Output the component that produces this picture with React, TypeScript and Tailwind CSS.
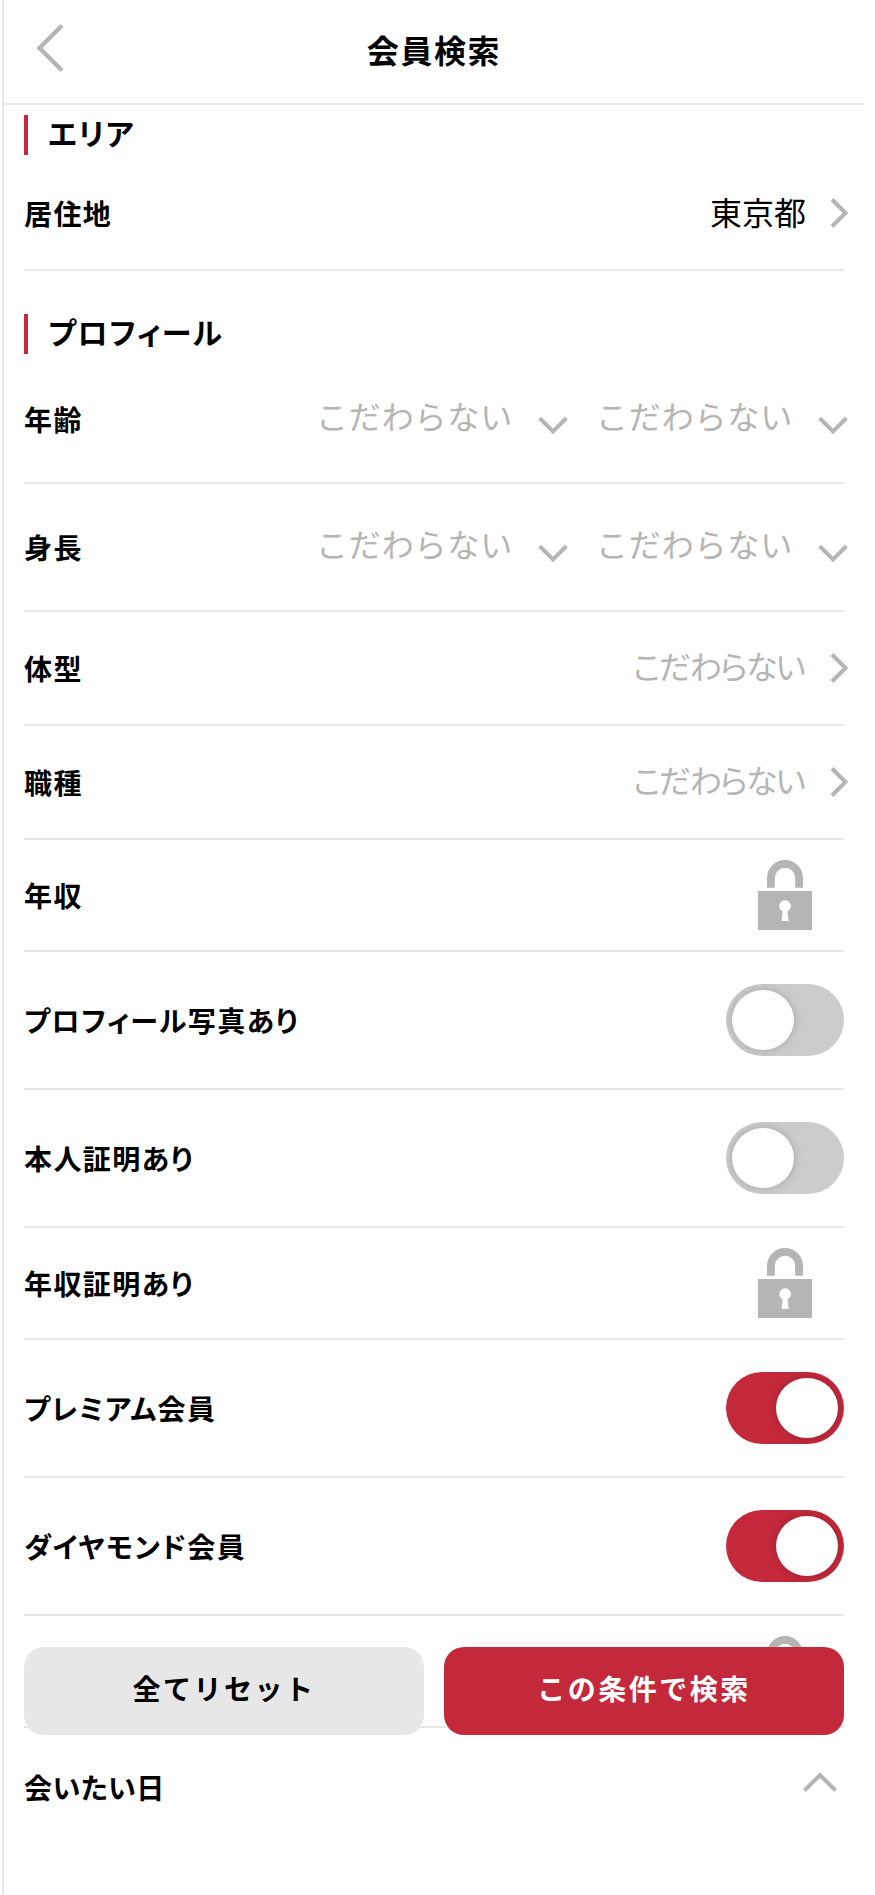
import clsx from 'clsx'
import { useState, type ReactNode } from 'react'

type Direction = 'right' | 'down' | 'up' | 'back'

const chevrons: Record<Direction, { width: number; height: number; d: string; stroke: number }> = {
  right: { width: 20, height: 32, d: 'M3 2.5L16.5 16L3 29.5', stroke: 4 },
  down: { width: 32, height: 20, d: 'M2.7 3.2L16 16.5L29.3 3.2', stroke: 4 },
  up: { width: 36, height: 22, d: 'M2.5 19.5L18 4L33.5 19.5', stroke: 4 },
  back: { width: 28, height: 50, d: 'M26 2.5L3.5 25L26 47.5', stroke: 4.4 },
}

function Chevron({ direction, className }: { direction: Direction; className?: string }) {
  const { width, height, d, stroke } = chevrons[direction]
  return (
    <svg
      width={width}
      height={height}
      viewBox={`0 0 ${width} ${height}`}
      fill="none"
      stroke="#b5b5b5"
      strokeWidth={stroke}
      className={clsx('shrink-0', className)}
    >
      <path d={d} />
    </svg>
  )
}

function LockIcon() {
  return (
    <svg width="54" height="70" viewBox="0 0 54 70" className="mr-8 shrink-0">
      <path d="M12.9 27.7V18a14.1 14.1 0 0 1 28.2 0V27.7" fill="none" stroke="#b5b5b5" strokeWidth="7.8" />
      <path
        d="M0 31H54V70H0ZM24.7 51.3L23.5 61H30.7L29.5 51.3A5.8 5.8 0 1 0 24.7 51.3Z"
        fill="#b5b5b5"
        fillRule="evenodd"
      />
    </svg>
  )
}

function Toggle({ label, defaultOn = false }: { label: string; defaultOn?: boolean }) {
  const [on, setOn] = useState(defaultOn)
  return (
    <button
      role="switch"
      aria-checked={on}
      aria-label={label}
      onClick={() => setOn((value) => !value)}
      className={clsx(
        'flex h-[72px] w-[118px] shrink-0 items-center overflow-hidden rounded-full px-1.5',
        on ? 'justify-end bg-[#c3293b]' : 'bg-[#cccccc]',
      )}
    >
      <span className="h-[60px] w-[62px] rounded-[50%] bg-white shadow-[0_0_10px_rgba(0,0,0,0.2)]" />
    </button>
  )
}

function SectionTitle({ children, className }: { children: ReactNode; className?: string }) {
  return (
    <h2
      className={clsx(
        'mb-0.5 flex h-10 items-center border-l-4 border-[#c3293b] pb-1.5 pl-5 text-[30px] leading-none font-bold tracking-[0.05em]',
        className,
      )}
    >
      {children}
    </h2>
  )
}

interface RowProps {
  label?: string
  className: string
  children: ReactNode
}

function Row({ label, className, children }: RowProps) {
  return (
    <div className={clsx('flex items-center justify-between border-b-2 border-[#e7e7e7]', className)}>
      <span className="text-[28px] leading-10 font-bold tracking-[0.05em]">{label}</span>
      {children}
    </div>
  )
}

function LinkValue({ value, muted = false }: { value: string; muted?: boolean }) {
  return (
    <button className="-mr-[5px] flex items-center gap-[23px]">
      <span
        className={clsx(
          'text-[32px] leading-10',
          muted ? 'mr-0.5 pb-1.5 tracking-[-0.056em] text-[#b5b5b5]' : 'pb-1',
        )}
      >
        {value}
      </span>
      <Chevron direction="right" />
    </button>
  )
}

function RangeSelect() {
  return (
    <div className="-mr-[5px] flex gap-6">
      {['min', 'max'].map((key) => (
        <button key={key} className="flex w-64 items-center justify-between pl-[3px] text-[#b5b5b5]">
          <span className="pb-2 text-[32px] leading-10 tracking-[0.027em] [font-feature-settings:normal]">
            こだわらない
          </span>
          <Chevron direction="down" className="mt-3" />
        </button>
      ))}
    </div>
  )
}

export default function App() {
  return (
    <div
      lang="ja"
      className="relative h-[1895px] overflow-hidden bg-white pl-0.5 font-['Noto_Sans_CJK_JP',sans-serif] text-black [font-feature-settings:'palt']"
    >
      <div className="h-full w-[862px] border-l-2 border-[#e7e7e7]">
        <header className="grid h-[105px] grid-cols-[1fr_auto_1fr] items-center border-b-2 border-[#e7e7e7] pb-2">
          <button aria-label="戻る" className="pl-8">
            <Chevron direction="back" />
          </button>
          <h1 className="pt-0.5 text-[32px] leading-10 font-bold tracking-[0.05em]">会員検索</h1>
        </header>

        <main className="px-5 pt-2.5">
          <SectionTitle>エリア</SectionTitle>
          <Row label="居住地" className="h-[114px]">
            <LinkValue value="東京都" />
          </Row>

          <SectionTitle className="mt-[43px]">プロフィール</SectionTitle>
          <Row label="年齢" className="h-32">
            <RangeSelect />
          </Row>
          <Row label="身長" className="h-32">
            <RangeSelect />
          </Row>
          <Row label="体型" className="h-[114px]">
            <LinkValue value="こだわらない" muted />
          </Row>
          <Row label="職種" className="h-[114px]">
            <LinkValue value="こだわらない" muted />
          </Row>
          <Row label="年収" className="h-28">
            <LockIcon />
          </Row>
          <Row label="プロフィール写真あり" className="h-[138px]">
            <Toggle label="プロフィール写真あり" />
          </Row>
          <Row label="本人証明あり" className="h-[138px]">
            <Toggle label="本人証明あり" />
          </Row>
          <Row label="年収証明あり" className="h-28">
            <LockIcon />
          </Row>
          <Row label="プレミアム会員" className="h-[138px]">
            <Toggle label="プレミアム会員" defaultOn />
          </Row>
          <Row label="ダイヤモンド会員" className="h-[138px]">
            <Toggle label="ダイヤモンド会員" defaultOn />
          </Row>
          <Row className="h-28">
            <LockIcon />
          </Row>
          <div className="flex h-[116px] items-center justify-between">
            <span className="pt-0.5 text-[28px] leading-10 font-bold tracking-[0.02em]">会いたい日</span>
            <Chevron direction="up" className="mr-1.5 mb-2" />
          </div>
        </main>
      </div>

      {/* Action bar floats above the list */}
      <div className="absolute bottom-40 left-6 flex w-[820px] gap-5 text-[28px] leading-10 font-bold tracking-[0.09em] [font-feature-settings:normal]">
        <button className="h-[88px] flex-1 rounded-[20px] bg-[#e7e7e7] pb-1.5">全てリセット</button>
        <button className="h-[88px] flex-1 rounded-[20px] bg-[#c3293b] pb-1.5 text-white">この条件で検索</button>
      </div>
    </div>
  )
}
